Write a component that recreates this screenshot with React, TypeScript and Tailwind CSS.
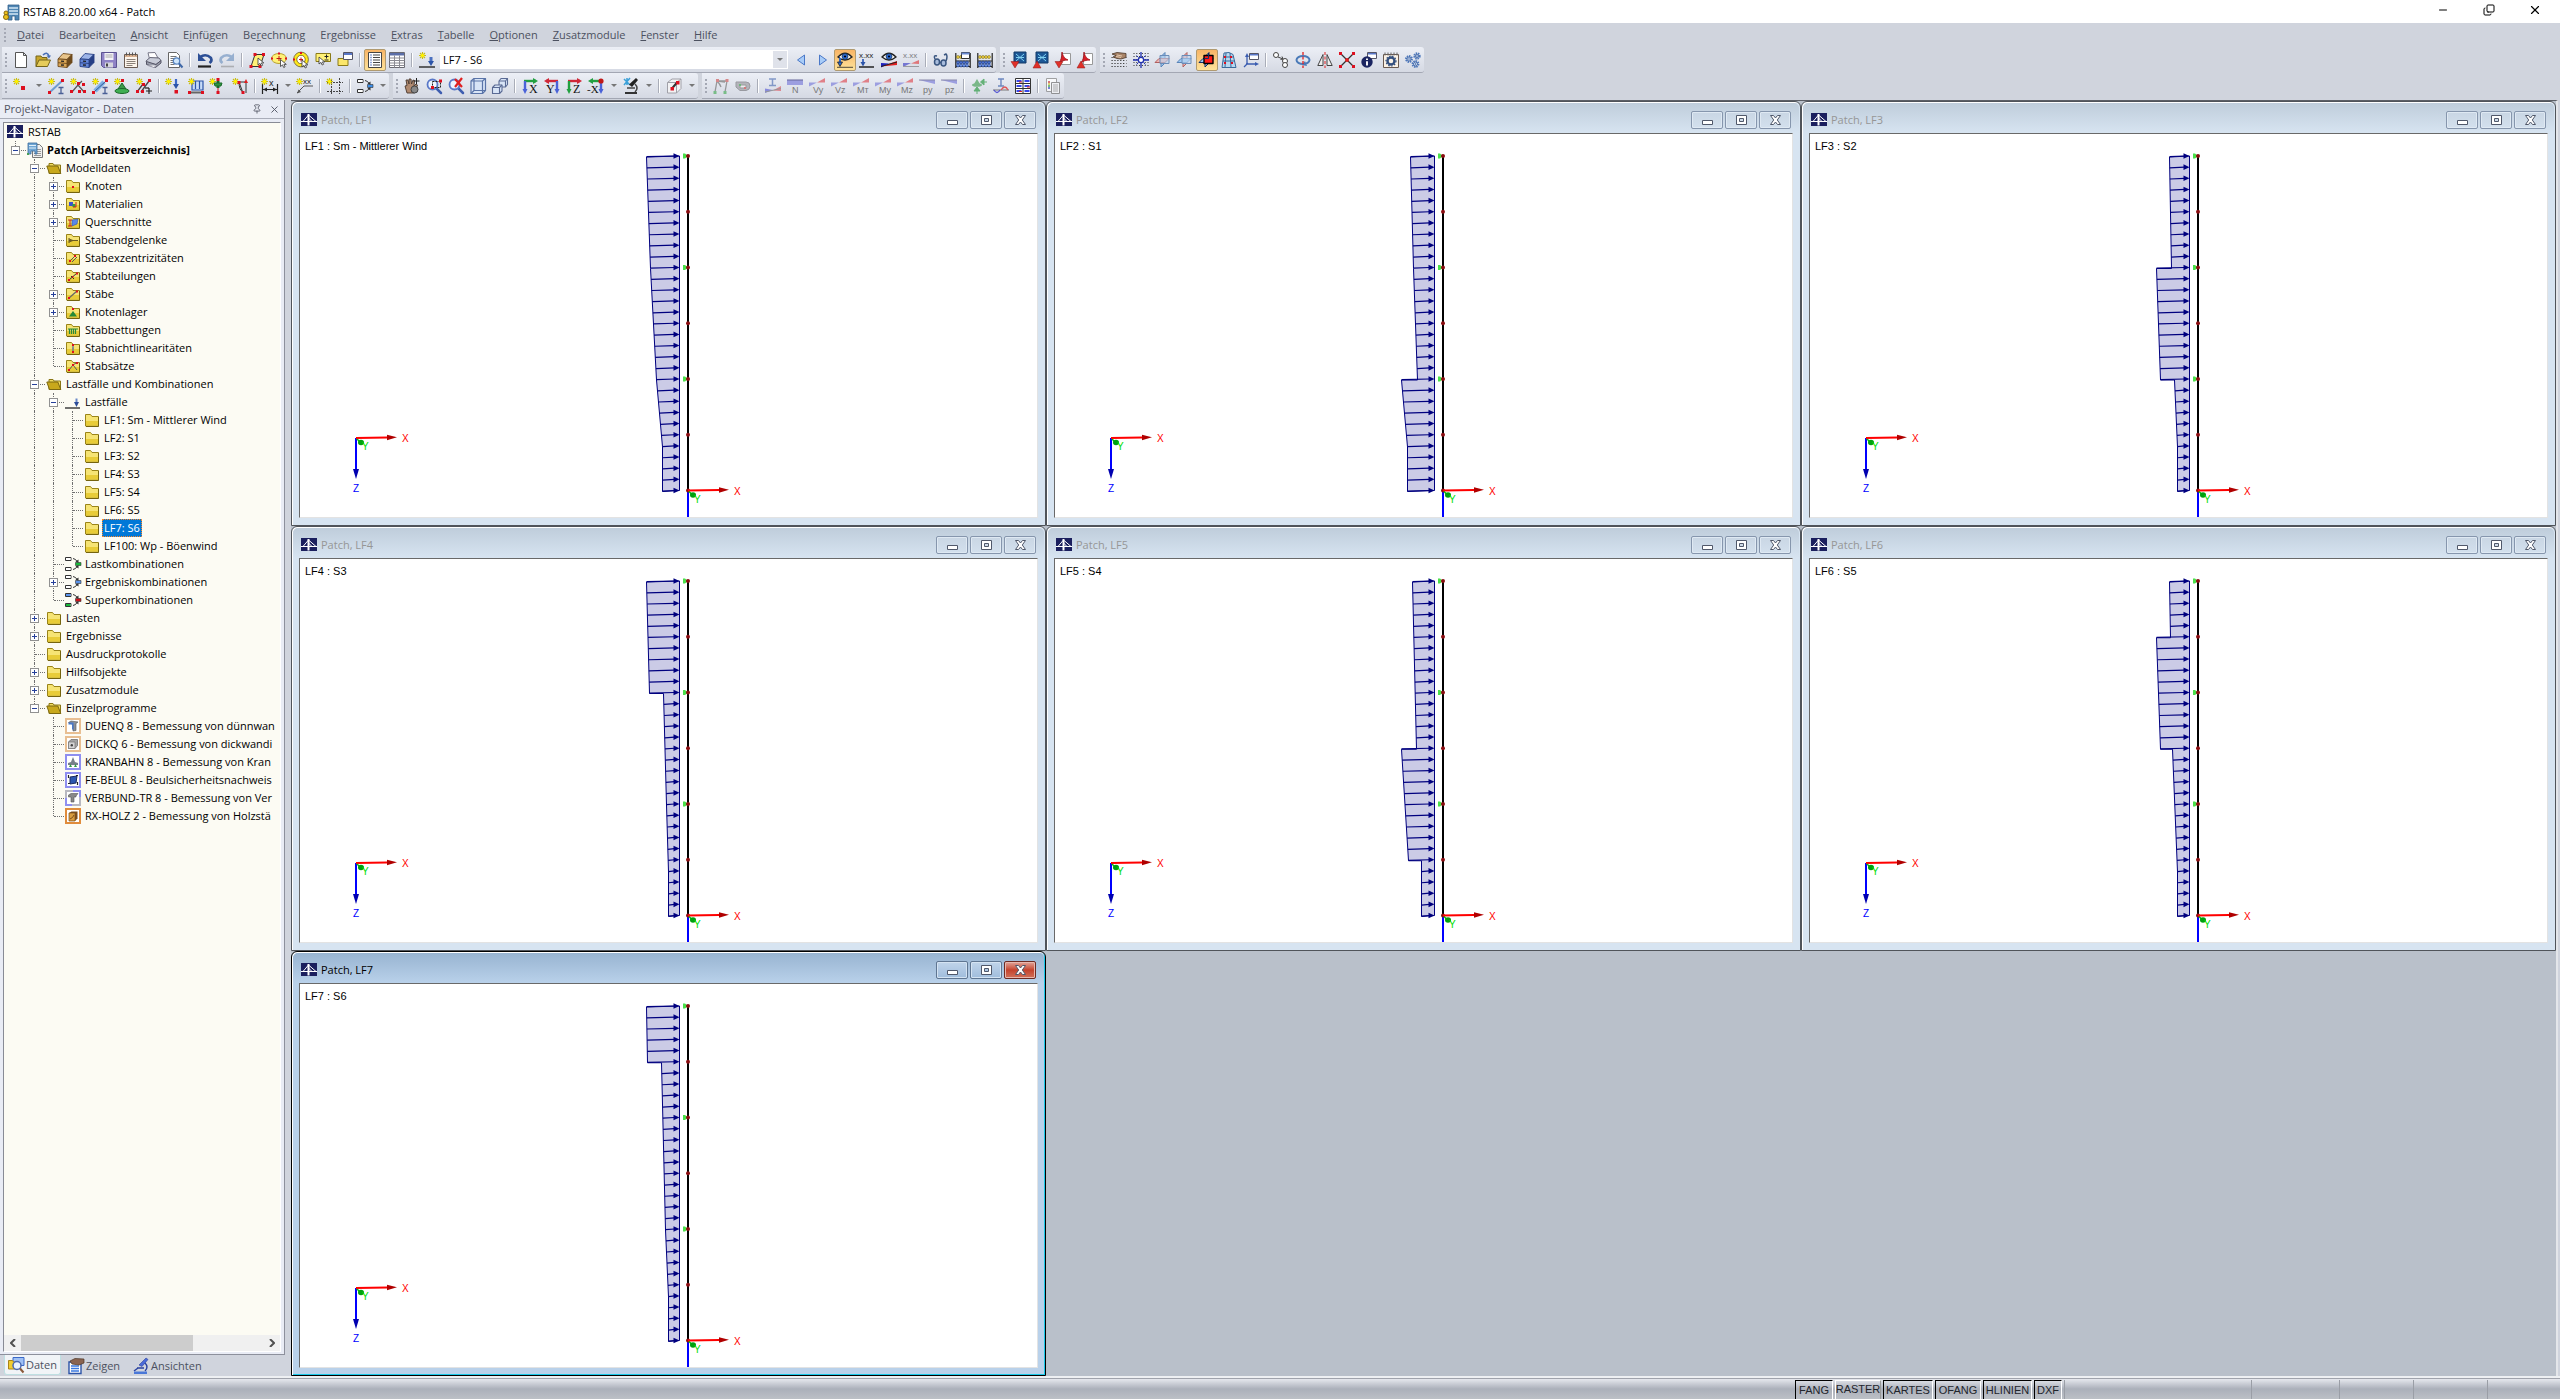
import React from "react";
import { Minus, Copy, X, Pin } from "lucide-react";

type Node = React.ReactNode;

/* ---------- small drawing parts shared by the icons (16 x 16 grid) ---------- */

const Star = ({ x = 0, y = 0 }: { x?: number; y?: number }) => (
  <g transform={`translate(${x} ${y})`}>
    <path d="M3.5 0v7M0 3.5h7M1 1l5 5M6 1L1 6" stroke="#c9bd12" strokeWidth="1.1" />
    <circle cx="3.5" cy="3.5" r="1.7" fill="#fff200" />
  </g>
);
const Dot = ({ x, y, s = 3, c = "#dd1020" }: { x: number; y: number; s?: number; c?: string }) => (
  <rect x={x} y={y} width={s} height={s} fill={c} />
);
const Txt = ({ x, y, s = 8, c = "#222", children }: { x: number; y: number; s?: number; c?: string; children: Node }) => (
  <text x={x} y={y} fontSize={s} fill={c} fontFamily="Liberation Sans, sans-serif">
    {children}
  </text>
);
const Cursor = ({ x, y }: { x: number; y: number }) => (
  <path d={`M${x} ${y}v7l2-1.6 1.2 2.6 1.4-.7-1.2-2.4h2.4z`} fill="#fff" stroke="#333" strokeWidth=".8" />
);
const Beam = () => <path d="M10.500 9.500h5M13 9.500v6M10.500 15.500h5" stroke="#4a5f96" strokeWidth="1.300" />;
const Cabinet = ({ a, b, c }: { a: string; b: string; c: string }) => (
  <g stroke={c} strokeWidth=".9" strokeLinejoin="round">
    <path d="M1 7l5-5.500 9 1-5 5z" fill={a} />
    <path d="M10 7.500l5-5v8l-5 5z" fill={c} />
    <path d="M1 7l9 .5v8L1 14.500z" fill={b} />
    <path d="M1 10.700l9 .8" />
    <path d="M4 9.200l3 .2M4 13l3 .2" stroke="#222" strokeWidth="1.300" />
  </g>
);
const Section = ({ label, half = false }: { label: string; half?: boolean }) => (
  <g>
    {half ? (
      <path d="M0 2h16v4z" fill="#9c9ee0" />
    ) : (
      <g>
        <path d="M8 4.500L16 0v4.500z" fill="#e08088" />
        <path d="M0 8.500L8 4.500H0z" fill="#9c9ee0" />
      </g>
    )}
    {half && <path d="M0 2h16" stroke="#8888a8" />}
    <Txt x={4} y={15} s={9} c="#777">
      {label}
    </Txt>
  </g>
);
const AxisView = ({ label, a, b, flip = false }: { label: string; a: string; b: string; flip?: boolean }) => (
  <g>
    <path d={flip ? "M14 3H2" : "M2 3h12"} stroke={a} strokeWidth="2.400" />
    <path d={flip ? "M5 0v6L0 3z" : "M11 0v6l5-3z"} fill={a} />
    <path d={flip ? "M13 3v9" : "M3 3v9"} stroke={b} strokeWidth="2.400" />
    <path d={flip ? "M10.500 11h5L13 16z" : "M.5 11h5L3 16z"} fill={b} />
    <text x={flip ? 2 : 7} y={15} fontSize="12" fill="#111" fontFamily="Liberation Serif, serif">
      {label}
    </text>
  </g>
);
const Lens = () => (
  <g>
    <path d="M10 10l5 5" stroke="#3f5eb0" strokeWidth="2.500" strokeLinecap="round" />
    <circle cx="6.500" cy="6.500" r="5" fill="#eef4ff" stroke="#5a78c8" strokeWidth="1.800" />
  </g>
);
const Eye = () => (
  <g>
    <path d="M1 5Q8-2.500 15 5 8 11 1 5z" fill="#fff" stroke="#222" strokeWidth="1.300" />
    <circle cx="8" cy="4.500" r="3" fill="#2c6ad0" stroke="#123" strokeWidth=".6" />
    <circle cx="8" cy="4.500" r="1.100" fill="#001" />
  </g>
);
const Planes = ({ mode }: { mode: number }) => (
  <g strokeWidth="1" strokeLinejoin="round">
    <path d="M6 4.500l4-4v10.500l-4 4z" fill={mode === 1 ? "#efb5b2" : "#9cc8f2"} stroke={mode === 1 ? "#b06060" : mode === 2 ? "#12306a" : "#5a84b8"} />
    <path d="M0 10.500l4-4h10l-4 4z" fill={mode === 0 ? "#efb5b2" : "#9cc8f2"} stroke={mode === 0 ? "#b06060" : mode === 2 ? "#12306a" : "#5a84b8"} />
    {mode === 2 ? (
      <path d="M5 3.500h9v8H5z" fill="#ff1a1a" stroke="#000" strokeWidth="1.400" />
    ) : (
      <path d="M5 3.500h9v8H5z" fill="#b9d2ee" fillOpacity=".6" stroke="#6a8cb8" />
    )}
    {mode === 2 && <path d="M9.500 1v5.500H5.500" fill="none" stroke="#12306a" />}
  </g>
);
const Abacus = ({ win = false }: { win?: boolean }) => (
  <g>
    <path d="M.8 1v15M15.200 1v15M.8 9h15M.8 14.500h15" stroke="#222" strokeWidth="1.200" />
    {[2.500, 5.500, 8.500, 11.500].map((x) => (
      <g key={x}>
        <circle cx={x + 0.5} cy="5" r="1.500" fill="#f0d040" stroke="#665a10" strokeWidth=".5" />
        <circle cx={x + 0.5} cy="10.500" r="1.500" fill="#4a70d0" stroke="#123070" strokeWidth=".5" />
        <circle cx={x + 0.5} cy="13.500" r="1.500" fill="#6a90e8" stroke="#123070" strokeWidth=".5" />
      </g>
    ))}
    {win && <path d="M6.500.5h8v6h-8z" fill="#fff" stroke="#333" />}
    {win && <path d="M6.500.5h8v2h-8z" fill="#6a8ad0" />}
  </g>
);
const Combo = ({ a = "#fff", b = "#fff", c }: { a?: string; b?: string; c: string }) => (
  <g>
    <path d="M.5 1.500h5.500v3H.5zM.5 11.500h5.500v3H.5z" fill="#fff" stroke="#333" />
    <path d="M1 2h4.500v2H1z" fill={a} />
    <path d="M1 12h4.500v2H1z" fill={b} />
    <path d="M8 2.500q3 .5 4 3M8 13.500q3-.5 4-3" fill="none" stroke="#333" />
    <path d="M10.500 5.500l3-2v3.500zM10.500 10.500l3 2V9z" fill="#333" />
    <path d="M10.500 6.500H16v3h-5.500z" fill={c} stroke="#333" strokeWidth=".6" />
  </g>
);
const Screen = ({ up = false }: { up?: boolean }) => (
  <g>
    <path d="M3 0h12v11H3z" fill="#1c5796" stroke="#123a68" />
    <path d="M5 2l8 7M13 2L5 9M5 5.500h8" stroke="#7fd0f0" />
    <path d={up ? "M4 9l4 7H0z" : "M0 9.500h8L4 16z"} fill="#e03028" stroke="#901818" strokeWidth=".5" />
  </g>
);
const Pdf = ({ up = false }: { up?: boolean }) => (
  <g>
    <path d="M6.500 1.500h9v11h-9z" fill="#fff" stroke="#999" />
    <path d="M7 0c1 4 2 6 6 8-4 0-7 1-9 3 2-3 3-6 3-11z" fill="#d82028" stroke="#a01018" strokeWidth=".8" />
    <path d={up ? "M4 9l4 7H0z" : "M0 9.500h8L4 16z"} fill="#e03028" stroke="#901818" strokeWidth=".5" />
  </g>
);
const Gear = ({ x, y, r }: { x: number; y: number; r: number }) => (
  <g>
    <circle cx={x} cy={y} r={r} fill="none" stroke="#4d78bd" strokeWidth="1.800" strokeDasharray="1.500 .8" />
    <circle cx={x} cy={y} r={r - 1} fill="#cfe0f6" stroke="#2f5598" strokeWidth=".8" />
    <circle cx={x} cy={y} r=".7" fill="#2f5598" />
  </g>
);
const Grid = () => (
  <path
    d="M.5 5.500h15M.5 8.500h15M.5 11.500h15M.5 14.500h15"
    stroke="#333"
    strokeWidth="1.200"
    strokeDasharray="1.200 1.700"
  />
);

const icons: Record<string, Node> = {
  new: <path d="M2.500.5h8l3 3v12h-11zM10.500.5v3h3" fill="#fff" stroke="#555" />,
  open: (
    <g stroke="#75651a" strokeLinejoin="round">
      <path d="M1 14.500V4h5l1 1.500h5V8" fill="#c8a62c" />
      <path d="M1 14.500L4 8h11.500l-3 6.500z" fill="#e6cc5a" />
      <path d="M8 3q4-4 6 1" fill="none" stroke="#4a70b8" strokeWidth="1.600" />
      <path d="M11.500 3.500h4.500l-2 3z" fill="#4a70b8" stroke="none" />
    </g>
  ),
  cabA: <Cabinet a="#e8c48a" b="#dba757" c="#6e4a1c" />,
  cabB: <Cabinet a="#9cb4e8" b="#6486d6" c="#263f86" />,
  save: (
    <g>
      <path d="M.5.5h15v15h-13l-2-2z" fill="#8f83c6" stroke="#5d5492" />
      <path d="M3.500 1h9v7h-9z" fill="#f4f4f8" />
      <path d="M4.500 3h7M4.500 5h7" stroke="#aaa" />
      <path d="M4 10.500h8v5H4z" fill="#d6d6de" />
      <path d="M5 11.500h2v3H5z" fill="#444" />
    </g>
  ),
  notes: (
    <g>
      <path d="M1.500 2.500h13v13h-13z" fill="#fdf5ec" stroke="#6a5a50" />
      <path d="M2 3h12v2H2z" fill="#d8b090" />
      <path d="M3.500.5v3M6.500.5v3M9.500.5v3M12.500.5v3" stroke="#555" />
      <path d="M3.500 7.500h9M3.500 9.500h9M3.500 11.500h9M3.500 13.500h6" stroke="#8a8078" />
    </g>
  ),
  print: (
    <g strokeLinejoin="round">
      <path d="M4.500 7L3 .8l7-.3 3 5.500z" fill="#fff" stroke="#778" />
      <path d="M1 9l4-3.500 9 .5 2 2.500-5 4-9-1z" fill="#c8ccd8" stroke="#667" />
      <path d="M1.500 9.500v3l9 3 5.500-4.500V8.500l-5 4z" fill="#9a9eac" stroke="#556" />
      <path d="M3 13.500l6 2 2-2" fill="#fff" stroke="#99a" />
    </g>
  ),
  preview: (
    <g>
      <path d="M1.500.5h8l3 3v12h-11z" fill="#fff" stroke="#666" />
      <path d="M3.500 4.500h6M3.500 6.500h7M3.500 8.500h4M3.500 10.500h4M3.500 12.500h4" stroke="#777" />
      <circle cx="9.500" cy="9" r="3.200" fill="#cfe6fb" stroke="#5884c0" strokeWidth="1.300" />
      <path d="M12 11.500l3.500 4" stroke="#3f68a8" strokeWidth="2" />
    </g>
  ),
  undo: (
    <g>
      <path d="M3 5q6-4 11 1 1.500 3-1.500 5" fill="none" stroke="#2c4f96" strokeWidth="2.600" />
      <path d="M1 1v8h8z" fill="#2c4f96" />
      <path d="M1 14.500h13" stroke="#222" strokeWidth="2.200" />
    </g>
  ),
  redo: (
    <g opacity=".55">
      <path d="M13 5Q7 1 2 6 .5 9 3.500 11" fill="none" stroke="#5a84b8" strokeWidth="2.600" />
      <path d="M15 1v8H7z" fill="#5a84b8" />
      <path d="M2 14.500h13" stroke="#888" strokeWidth="1.600" />
    </g>
  ),
  selRhomb: (
    <g>
      <path d="M2 14.500L6 2.500h9l-4 12z" fill="#fff176" stroke="#333" />
      <Dot x={4.500} y={1} />
      <Dot x={13} y={1} />
      <Dot x={0.500} y={13} />
      <Dot x={9.500} y={13} />
      <Cursor x={9} y={6} />
    </g>
  ),
  selEllipse: (
    <g>
      <ellipse cx="8" cy="6.500" rx="7.500" ry="5" fill="#fff176" stroke="#b8a030" />
      <Dot x={7} y={0.500} s={2} />
      <Dot x={0} y={5.500} s={2} />
      <Dot x={14} y={5.500} s={2} />
      <path d="M8 4v5M5.500 6.500h5" stroke="#c01818" />
      <Cursor x={9.500} y={7.500} />
    </g>
  ),
  selRing: (
    <g>
      <circle cx="8" cy="7.500" r="5.700" fill="#fff" stroke="#ffe81a" strokeWidth="3" />
      <circle cx="8" cy="7.500" r="7.400" fill="none" stroke="#6a5a10" strokeWidth=".8" />
      <circle cx="8" cy="7.500" r="4.200" fill="none" stroke="#6a5a10" strokeWidth=".8" />
      <path d="M8 5.500v4M6 7.500h4" stroke="#d01818" />
      <Dot x={7} y={0} s={2} />
      <Dot x={0} y={6.500} s={2} />
      <Cursor x={9} y={8} />
    </g>
  ),
  selPlus: (
    <g>
      <path d="M1 1.500h14.500v8H1z" fill="#fff176" stroke="#8a7a18" />
      <Cursor x={4} y={5} />
      <path d="M11.500 2.500v4M9.500 4.500h4M9.500 8h4" stroke="#222" />
    </g>
  ),
  selWin: (
    <g>
      <path d="M1 6.500h10v7H1z" fill="#fbe66a" stroke="#8a7a18" />
      <path d="M6.500.5h9v7h-9z" fill="#fff" stroke="#556" />
      <path d="M7 1h8v2H7z" fill="#5a78c8" />
    </g>
  ),
  list: (
    <g>
      <path d="M1.500.5h13v15h-13z" fill="#fff" stroke="#444" />
      <path d="M3.500 3h1M3.500 5.500h1M3.500 8h1M3.500 10.500h1M3.500 13h1" stroke="#2a50b0" strokeWidth="1.500" />
      <path d="M6 3h7M6 5.500h7M6 8h7M6 10.500h7M6 13h7" stroke="#444" />
    </g>
  ),
  table: (
    <g>
      <path d="M.5.500h15v15H.5z" fill="#fff" stroke="#6a6a72" />
      <path d="M1 1h14v2.500H1z" fill="#5a6ea8" />
      <path d="M.5 6h15M.5 8.500h15M.5 11h15M.5 13.500h15M5.500 3.500v12M10.500 3.500v12" stroke="#8a8a92" />
    </g>
  ),
  loadcase: (
    <g>
      <Star />
      <path d="M0 15h16" stroke="#333" strokeWidth="1.500" />
      <path d="M12 5v5" stroke="#4a70c0" strokeWidth="3" />
      <path d="M9 9h6l-3 5z" fill="#2c54a8" />
    </g>
  ),
  prev: <path d="M11.500 3v10L4.500 8z" fill="#a8ccf8" stroke="#4a78c8" />,
  next: <path d="M4.500 3v10l7-5z" fill="#a8ccf8" stroke="#4a78c8" />,
  eyeLoad: (
    <g>
      <Eye />
      <path d="M3 6v6" stroke="#2c6ad0" strokeWidth="2" />
      <path d="M.5 10h5L3 14.500zM0 15.300h16" fill="#2c6ad0" stroke="#222" strokeWidth=".8" />
    </g>
  ),
  xxx: (
    <g>
      <Txt x={0} y={6} s={8}>x.xx</Txt>
      <path d="M4 7v5" stroke="#4a70c0" strokeWidth="2" />
      <path d="M1.500 10h5L4 14.500z" fill="#2c54a8" />
      <path d="M0 15h15" stroke="#222" strokeWidth="1.500" />
    </g>
  ),
  eyeRes: (
    <g>
      <Eye />
      <path d="M0 14.500L16 9v4z" fill="#e02020" />
      <path d="M0 15.500V11l8 .5z" fill="#2020c0" />
      <path d="M0 14.500L16 10" stroke="#222" />
    </g>
  ),
  xxxRes: (
    <g opacity=".55">
      <Txt x={0} y={6} s={8}>x.xx</Txt>
      <path d="M8 11.500L16 8v4z" fill="#e02020" />
      <path d="M0 15V11h8z" fill="#2020c0" />
      <path d="M0 14.500h16" stroke="#666" />
    </g>
  ),
  glasses: (
    <g fill="none" stroke="#3a5680" strokeWidth="1.500">
      <ellipse cx="4" cy="10" rx="2.500" ry="3" fill="#a8bcdc" />
      <ellipse cx="10.500" cy="11" rx="2.500" ry="3" fill="#a8bcdc" />
      <path d="M2 7Q0 3 4 4M13 9q2-5 0-7l-2 1M6.500 10.500h1.500" />
    </g>
  ),
  abacusWin: <Abacus win />,
  abacus: <Abacus />,
  scrDown: <Screen />,
  scrUp: <Screen up />,
  pdfDown: <Pdf />,
  pdfUp: <Pdf up />,
  handGrid: (
    <g>
      <Grid />
      <path d="M1 2l5-1.500 9 1v4l-5 1.500-4-.5-4-1.500 3-1.500z" fill="#a88468" stroke="#4a3628" strokeWidth=".8" />
      <path d="M6 3l5 1M5 4.500l5 1" stroke="#f0d8c0" strokeWidth=".8" />
    </g>
  ),
  snapGrid: (
    <g>
      <path d="M.5 1.500h15M.5 4.500h15M.5 7.500h15M.5 10.500h15M.5 13.500h15" stroke="#333" strokeDasharray="1 1.800" />
      <circle cx="8" cy="8" r="2.600" fill="#fff" stroke="#2030b0" strokeWidth="1.200" />
      <path d="M8 0v5M8 11v5M0 8h5M11 8h5" stroke="#2030b0" strokeWidth="1.300" />
      <path d="M3.500 3.500l2 2M12.500 3.500l-2 2M3.500 12.500l2-2M12.500 12.500l-2-2" stroke="#2030b0" />
    </g>
  ),
  planeA: <Planes mode={0} />,
  planeB: <Planes mode={1} />,
  planeC: <Planes mode={2} />,
  building: (
    <g>
      <path d="M3 1l5-.5 4 2 3 13H1z" fill="#b8d8f0" stroke="#3a6a9a" />
      <path d="M5 1L4 15M9 1l1 14M2.500 5h10M2 9h12" stroke="#3a6a9a" />
      <Dot x={3} y={4} s={2} />
      <Dot x={9} y={4} s={2} />
      <Dot x={3} y={10} s={2} />
      <Dot x={10} y={10} s={2} />
    </g>
  ),
  coords: (
    <g>
      <path d="M4 12V4M3 12h10M5 11l-4 4" stroke="#3a5cb0" strokeWidth="1.300" fill="none" />
      <path d="M2 5l2-4 2 4zM12 10l4 2-4 2z" fill="#3a5cb0" />
      <path d="M6.500 1.500h9v6h-9z" fill="#fff" stroke="#556" />
      <path d="M7 2h8v1.500H7z" fill="#5a78c8" />
    </g>
  ),
  moveCopy: (
    <g fill="#fff" stroke="#444">
      <circle cx="3" cy="3" r="2.500" />
      <circle cx="12" cy="9" r="2.500" />
      <circle cx="12" cy="13" r="2.500" />
      <path d="M5 5l5 2M7.500 7.500L10 7 9 4.500" fill="none" />
    </g>
  ),
  rotate: (
    <g fill="none">
      <ellipse cx="8" cy="8" rx="6.500" ry="4" stroke="#4a7ab8" strokeWidth="2" />
      <path d="M10 9l-3 4 5 1z" fill="#4a7ab8" />
      <path d="M8 0v16" stroke="#e02020" strokeWidth="1.300" strokeDasharray="3 1.500" />
    </g>
  ),
  mirror: (
    <g fill="none" stroke="#444">
      <path d="M6 2.500v11H.8zM10 2.500v11h5.200z" fill="#eee" />
      <path d="M8 0v16" stroke="#e02020" strokeDasharray="3 1.500" />
    </g>
  ),
  cross: (
    <g>
      <path d="M1.500 1.500l13 13M14.500 1.500l-13 13" stroke="#333" strokeWidth="1.300" />
      <Dot x={0} y={0} />
      <Dot x={13} y={0} />
      <Dot x={0} y={13} />
      <Dot x={13} y={13} />
      <circle cx="8" cy="8" r="2" fill="#e02020" />
    </g>
  ),
  info: (
    <g>
      <path d="M6.500.5h9v6h-9z" fill="#fff" stroke="#556" />
      <path d="M7 1h8v1.500H7z" fill="#5a78c8" />
      <circle cx="6" cy="10" r="5.700" fill="#1a2460" />
      <path d="M6 6.500v1.600M6 9.200v4.300" stroke="#fff" strokeWidth="1.900" />
    </g>
  ),
  gearPage: (
    <g>
      <path d="M.5 2.500h15v13H.5z" fill="#fbf2e6" stroke="#6a5a50" />
      <path d="M2 .5v3M5 .5v3M8 .5v3M11 .5v3M14 .5v3" stroke="#666" />
      <circle cx="8" cy="9" r="3.500" fill="none" stroke="#34507e" strokeWidth="2.400" />
      <circle cx="8" cy="9" r="5" fill="none" stroke="#34507e" strokeWidth="1.200" strokeDasharray="1.500 1.500" />
    </g>
  ),
  gears: (
    <g>
      <Gear x={4} y={7} r={3} />
      <Gear x={12} y={4} r={2.800} />
      <Gear x={10.500} y={12} r={3} />
    </g>
  ),
  node: (
    <g>
      <Star />
      <Dot x={8} y={8} s={4} />
    </g>
  ),
  member: (
    <g>
      <path d="M1.500 14.500l13-12" stroke="#6f9cd0" strokeWidth="2" />
      <Star />
      <Dot x={0} y={13} />
      <Dot x={13} y={1} />
      <Beam />
    </g>
  ),
  continuous: (
    <g>
      <path d="M2 14l6-7 6 7M8 7l4-4" stroke="#555" fill="none" strokeWidth="1.200" />
      <Star />
      <Dot x={0} y={12} />
      <Dot x={7} y={4} />
      <Dot x={12} y={5} />
      <Dot x={8} y={12} />
      <Dot x={13} y={12} />
    </g>
  ),
  memberSel: (
    <g>
      <path d="M3 13L12 4" stroke="#7fb0e6" strokeWidth="4.500" />
      <path d="M1.500 14.500l13-12" stroke="#33558a" />
      <Star />
      <Dot x={0} y={13} />
      <Dot x={13} y={1} />
      <Beam />
    </g>
  ),
  support: (
    <g>
      <path d="M8 5l4 6H4z" fill="#3c9a4a" stroke="#1c6a2a" />
      <ellipse cx="8" cy="13" rx="7" ry="2.500" fill="#3fae52" stroke="#1c6a2a" />
      <Dot x={7} y={1} />
      <Star />
    </g>
  ),
  setMember: (
    <g>
      <path d="M1 14L7 6M5 14L13 3M9 10h4" stroke="#444" strokeWidth="1.300" />
      <Star />
      <Dot x={0} y={12} />
      <Dot x={6} y={5} />
      <Dot x={12} y={1} />
      <Dot x={5} y={12} />
      <path d="M13 10v6M10 13h6" stroke="#222" strokeWidth="1.200" />
    </g>
  ),
  nodeLoad: (
    <g>
      <Star x={-1} />
      <path d="M10 1v7" stroke="#3a68c8" strokeWidth="2.200" />
      <path d="M7 6h6l-3 5z" fill="#2c54a8" />
      <Dot x={8.500} y={12} s={3.500} />
    </g>
  ),
  memberLoad: (
    <g>
      <path d="M4 3h11v9H4zM7.500 3v8M11.500 3v8" fill="#c8dcf8" stroke="#2c54a8" strokeWidth="1.200" />
      <Star />
      <path d="M1 14.500h14" stroke="#666" strokeWidth="2" />
      <Dot x={0} y={13} />
      <Dot x={13} y={13} />
    </g>
  ),
  imposed: (
    <g>
      <Star x={-1} />
      <path d="M8 3v7" stroke="#1c6a2a" strokeWidth="3" />
      <path d="M4 5h8l-1 3H5z" fill="#2c9440" stroke="#1c6a2a" />
      <Dot x={6.500} y={0} />
      <Dot x={6.500} y={13} />
      <path d="M8 10v3" stroke="#d01818" />
    </g>
  ),
  imperf: (
    <g>
      <Star />
      <path d="M6 4h7M7 4l4 11M14 3v12M7 4q0 8 4 10" fill="none" stroke="#333" />
      <Dot x={5.500} y={3} />
      <Dot x={9.500} y={13} />
      <path d="M12 5h4l-2-4z" fill="#e02020" />
    </g>
  ),
  dimension: (
    <g>
      <path d="M.5 6v10M15.500 6v10M1 11.500h14" stroke="#222" strokeWidth="1.200" />
      <path d="M1 11.500l4-2v4zM15 11.500l-4-2v4z" fill="#222" />
      <Star x={-1} />
      <Txt x={7} y={8} s={9}>x</Txt>
    </g>
  ),
  comment: (
    <g>
      <Star x={-1} />
      <Txt x={6} y={6} s={8}>xx</Txt>
      <path d="M16 8H7l-7 7" fill="none" stroke="#555" />
      <path d="M0 15.500l4-1.500-2.500-2.500z" fill="#555" />
    </g>
  ),
  raster: (
    <g>
      <path d="M4.500 2v14M12.500 0v16M0 4.500h16M0 13.500h16" stroke="#444" strokeDasharray="2 1" />
      <Star x={-1} />
    </g>
  ),
  comboBlue: <Combo c="#3d8ee8" />,
  hand: (
    <g>
      <path d="M3 15L1 8l2-.5L2 2l2 0 1 4 0-5h2l.5 5L9 2l1.500.5L10 8l2-2 1.500 1-3 8z" fill="#b08a70" stroke="#4a382c" strokeWidth=".9" />
      <path d="M12.500 0v6M9.500 3h6" stroke="#222" />
      <circle cx="10.500" cy="11.500" r="3.500" fill="#888" stroke="#444" />
    </g>
  ),
  zoomWin: (
    <g>
      <Lens />
      <path d="M6.500 3.500h8v6h-8z" fill="none" stroke="#222" strokeDasharray="2 1" />
      <Dot x={13} y={1.500} />
      <Dot x={5} y={8} />
    </g>
  ),
  zoomOff: (
    <g>
      <Lens />
      <path d="M7 1l7 8M14 0L7 9" stroke="#e02020" strokeWidth="2.200" />
    </g>
  ),
  wireBox: (
    <g fill="#d8e4f6" stroke="#5a74a8" strokeWidth="1.200" strokeLinejoin="round">
      <path d="M1 3l3-2.500h11.500v12l-3 3H1z" />
      <path d="M1 3h11.500v12.500M12.500 3l3-2.500M4 .5v12h11.500M1 15.500l3-3" fill="none" />
    </g>
  ),
  boxes: (
    <g fill="#d8e4f6" stroke="#5a6a94" strokeWidth="1.100" strokeLinejoin="round">
      <path d="M7 3l2-2.500h6.500v6l-2 2.500H7z" />
      <path d="M.5 9.500L3 7h7v6l-2.500 2.500h-7z" />
      <path d="M.5 9.500h7v6M7.500 9.500L10 7M7 3h6.500v6M13.500 3l2-2.500" fill="none" />
    </g>
  ),
  viewX: <AxisView label="X" a="#22a040" b="#4a62d8" />,
  viewY: <AxisView label="Y" a="#d02838" b="#4a62d8" flip />,
  viewZ: <AxisView label="Z" a="#d02838" b="#22a040" />,
  viewMX: (
    <g>
      <path d="M13 3H3" stroke="#22a040" strokeWidth="2.400" />
      <path d="M5 0v6L0 3z" fill="#22a040" />
      <path d="M13 4v9" stroke="#4a62d8" strokeWidth="2.400" />
      <path d="M10.500 11h5L13 16z" fill="#4a62d8" />
      <circle cx="13" cy="3" r="2.600" fill="#c01818" />
      <text x="-1" y="15" fontSize="11" fill="#111" fontFamily="Liberation Serif, serif">-X</text>
    </g>
  ),
  microscope: (
    <g>
      <path d="M1 1l6 6M7 0L1 7M4 0v7" stroke="#3aa0d8" strokeWidth="1.500" />
      <path d="M13 0l2 2-6 7-3-2.500z" fill="#222" />
      <path d="M12 6q4 4 0 8M4 10h8" fill="none" stroke="#444" strokeWidth="1.500" />
      <path d="M2 14h12v2H2z" fill="#333" />
    </g>
  ),
  cube: (
    <g>
      <path d="M1.500 4.500L6 1h9v9.500L10.500 15h-9zM1.500 4.500h9V15M10.500 4.500L15 1" fill="#f2f2f4" stroke="#a0a0a8" />
      <path d="M6 10.500l5-6" stroke="#333" strokeWidth="2" />
      <Dot x={4.500} y={9} s={3.500} />
      <Dot x={10} y={3} s={3.500} />
    </g>
  ),
  frame: (
    <g opacity=".7">
      <path d="M2 14L4 3h10l-2 11M4 3l8 1M4 3q3 3 4 6" fill="none" stroke="#777" strokeWidth="1.300" />
      <Dot x={3} y={1} c="#d06060" />
      <Dot x={12.500} y={1} c="#d06060" />
      <Dot x={0.500} y={13} c="#50b060" />
      <Dot x={10.500} y={13} c="#50b060" />
    </g>
  ),
  solid: (
    <g opacity=".8">
      <path d="M1 4h10q4 0 4 4t-4 4.500H5L1 9z" fill="#a8a8ae" stroke="#88888e" />
      <path d="M5 7h6v3H5z" fill="#eee" stroke="#888" />
      <Dot x={4} y={6} s={2} c="#50b060" />
      <Dot x={9} y={9} s={2} c="#d06060" />
    </g>
  ),
  internal: (
    <g opacity=".7">
      <path d="M4 1h7M7.500 1v6M4 7.500h7" stroke="#5a78b8" strokeWidth="1.500" />
      <path d="M0 15v-4.500L8 12z" fill="#6668d8" />
      <path d="M8 12.500L16 8v5z" fill="#e06068" />
      <path d="M0 14l16-3.500" stroke="#777" />
    </g>
  ),
  secN: (
    <g>
      <path d="M0 2h16v5H0z" fill="#9c9ee0" />
      <path d="M0 2h16" stroke="#66669a" />
      <Txt x={5} y={15} s={9} c="#777">N</Txt>
    </g>
  ),
  secVy: <Section label="Vy" />,
  secVz: <Section label="Vz" />,
  secMt: <Section label="Mт" />,
  secMy: <Section label="My" />,
  secMz: <Section label="Mz" />,
  secPy: <Section label="py" half />,
  secPz: <Section label="pz" half />,
  reaction: (
    <g opacity=".75">
      <path d="M6 1l3 5H3z" fill="#58a868" />
      <ellipse cx="6" cy="7" rx="5" ry="1.800" fill="#58a868" />
      <path d="M16 4h-5M13 1l-3.500 3L13 7zM6 16v-4M3 13l3-4 3 4z" fill="#3aa050" stroke="#3aa050" />
    </g>
  ),
  deform: (
    <g opacity=".85">
      <path d="M5 1h6M8 1v7M5 8h6" stroke="#5a78b8" strokeWidth="1.400" />
      <path d="M0 12h16" stroke="#666" />
      <path d="M1 12q3 5 6 0" fill="none" stroke="#3a3ad0" strokeWidth="1.300" />
      <path d="M8 12q4-6 7 0" fill="none" stroke="#e04040" strokeWidth="1.300" />
    </g>
  ),
  multi: (
    <g>
      <path d="M.5.5h15v15H.5zM8 0v16M0 5.500h16M0 10.500h16" fill="#fff" stroke="#333" />
      <path d="M1.500 3h5M9.500 3h5M1.500 8h5M9.500 8h5M1.500 13h5M9.500 13h5" stroke="#3848e8" strokeWidth="1.800" />
      <path d="M4 4h3M12 9h3M4 13.500h3" stroke="#e02020" />
    </g>
  ),
  report: (
    <g opacity=".75">
      <path d="M1.500.5h10v13h-10z" fill="#fff" stroke="#888" />
      <path d="M3 3h2v2H3z" fill="#d05050" />
      <path d="M3 5h2v2H3z" fill="#d8c850" />
      <path d="M3 7h2v2H3z" fill="#50b060" />
      <path d="M3 9h2v2H3z" fill="#5060d0" />
      <path d="M6.500 4.500h8v11h-8z" fill="#f4f4f6" stroke="#777" />
      <path d="M8 7h5M8 9h5M8 11h5M8 13h5" stroke="#999" />
    </g>
  ),
  /* navigator */
  logo: (
    <g>
      <path d="M0 1h16v13H0z" fill="#1b1f5e" />
      <path d="M0 9.500h16M7.500 3L2 9.500M7.500 3l7.500 6.500M7.500 6l3.500 3.500" stroke="#fff" />
      <path d="M6.500 2h2v11.500h-2z" fill="#fff" />
    </g>
  ),
  app: (
    <g>
      <path d="M5 1h11v15h-4v-4H9v4H5z" fill="#4f86b4" stroke="#33608a" strokeWidth=".8" />
      <path d="M6 4h9M6 7h9M6 10h9" stroke="#d4e6f4" strokeWidth="1.400" />
      <circle cx="3" cy="9" r="2" fill="#ecc21c" stroke="#8a6a10" />
      <circle cx="3" cy="13" r="2.500" fill="#ecc21c" stroke="#8a6a10" />
    </g>
  ),
  project: (
    <g>
      <path d="M5.500 2.500h7l3 3v10h-10z" fill="#f0f0f0" stroke="#777" />
      <path d="M10 7.500h4M10 9.500h4M7 11.500h7M7 13.500h7" stroke="#999" />
      <path d="M1 12V1h9v11H8V9H4v3z" fill="#6fa6d4" stroke="#3a6a9a" strokeWidth=".8" />
      <path d="M2 3.500h7M2 6h7" stroke="#e2f0fa" />
      <Dot x={0} y={11} s={2} c="#48a058" />
    </g>
  ),
  lastfall: (
    <g>
      <path d="M0 14h15" stroke="#333" strokeWidth="1.400" />
      <path d="M11.500 4.500v4" stroke="#6a88c8" strokeWidth="2" />
      <path d="M9 8h5l-2.500 5z" fill="#2c4c98" />
    </g>
  ),
  lk: <Combo c="#18b838" />,
  ek: <Combo c="#5a94ec" />,
  sk: <Combo a="#5a94ec" b="#18b838" c="#d01018" />,
  duenq: (
    <g>
      <path d="M1 1h14v14H1z" fill="#fff" stroke="#e8bf92" strokeWidth="2" />
      <path d="M3.500 4.500L6 3l7 1-2 1.500v7l-3 .5V6.500z" fill="#8a8f98" stroke="#555" strokeWidth=".6" />
      <path d="M3.500 4.500h5v7H7v-5H3.500z" fill="#4a78c8" />
    </g>
  ),
  dickq: (
    <g>
      <path d="M1 1h14v14H1z" fill="#fff" stroke="#e8bf92" strokeWidth="2" />
      <path d="M3.500 6L6 3.500h6.500v6L10 12.500H3.500z" fill="#a4a4a4" stroke="#666" strokeWidth=".7" />
      <path d="M3.500 6H10v6.500H3.500z" fill="#d4d4d4" stroke="#777" strokeWidth=".7" />
      <circle cx="6.800" cy="9.200" r="1.200" fill="#444" />
    </g>
  ),
  kran: (
    <g>
      <path d="M1 1h14v14H1z" fill="#fff" stroke="#8f8ff0" strokeWidth="2" />
      <path d="M8 3l2 5 3 1v2H3V9l3-1z" fill="#77808a" />
      <path d="M4 13l1.500-3L7 13zM9 13l1.500-3L12 13z" fill="#2f9a45" />
    </g>
  ),
  febeul: (
    <g>
      <path d="M1 1h14v14H1z" fill="#fff" stroke="#8f8ff0" strokeWidth="2" />
      <path d="M5 5l7-1-1 7-6 1z" fill="#2c56b0" stroke="#1c2c60" />
      <path d="M3.500 3v3M3 11.500h2M11 3.500h2M12.500 10v3" stroke="#222" strokeWidth="1.200" />
    </g>
  ),
  verbund: (
    <g>
      <path d="M1 1h14v14H1z" fill="#fff" stroke="#b8b8c0" strokeWidth="2" />
      <path d="M8 1h7v6M1 8v7h6" fill="none" stroke="#8f8ff0" strokeWidth="2" />
      <path d="M3.500 5L6 3.500h7L11 6v1H9v5H6V7H3.500z" fill="#888" stroke="#555" strokeWidth=".6" />
    </g>
  ),
  holz: (
    <g>
      <path d="M1 1h14v14H1z" fill="#fff" stroke="#e08c3c" strokeWidth="2" />
      <path d="M4 5l2.500-1.500H12.500v7L10 13H4z" fill="#7a4e1c" />
      <path d="M4 5h6v8H4z" fill="#d89c3e" stroke="#7a4e1c" strokeWidth=".7" />
      <path d="M5 11q3-1 4-4" fill="none" stroke="#7a4e1c" />
    </g>
  ),
  tabDaten: (
    <g>
      <path d="M5 .5h11v8H5z" fill="#9fc0f4" stroke="#3a68c8" />
      <path d="M.5 3.500h4l1 1.500h3v7h-8z" fill="#f0cc30" stroke="#a88418" />
      <circle cx="9" cy="8.500" r="4" fill="#e8f2ff" stroke="#4a68b0" strokeWidth="1.500" />
      <path d="M12 11.500l3.500 4" stroke="#8a5a3a" strokeWidth="2" />
    </g>
  ),
  tabZeigen: (
    <g>
      <path d="M1 4h12v11.500H1z" fill="#fff" stroke="#2c54a8" strokeWidth="1.400" />
      <path d="M3 8h8M3 10.500h8M3 13h8" stroke="#3a78e0" strokeWidth="1.300" />
      <path d="M2 3l5-2.500 9 .5v4l-5 2-7-1z" fill="#8a6450" stroke="#4a3424" strokeWidth=".7" />
    </g>
  ),
  tabAnsichten: (
    <g>
      <path d="M13 0l2 1.500-6 7L6 7z" fill="#4a6ad8" stroke="#2840a0" strokeWidth=".6" />
      <path d="M12 5q4 4 0 8M5 10l-4 3M4 10h7" fill="none" stroke="#2840a0" strokeWidth="1.400" />
      <path d="M1 13.500h13V16H1z" fill="#4a78d8" />
    </g>
  ),
};

const folderMarks: Record<string, Node> = {
  plain: null,
  knoten: <Dot x={7} y={8} s={2} />,
  material: (
    <g>
      <Dot x={4} y={6} s={4} c="#3a50d0" />
      <Dot x={7.500} y={8} c="#30a040" />
      <path d="M11 6v5h-3" fill="none" stroke="#d02020" />
    </g>
  ),
  quer: (
    <g>
      <path d="M7 6l6-1-1 5-5 2z" fill="#5a88e8" stroke="#3050a8" strokeWidth=".6" />
      <path d="M3 6h4M5 6v6M3 12h4" stroke="#c02020" />
    </g>
  ),
  gelenk: <path d="M4 6v5M4 8.500h9M4 7l4 1.500-4 1.500" fill="none" stroke="#6a5a20" />,
  exz: (
    <g>
      <path d="M5 11l5-5M7 12l5-5" stroke="#555" />
      <Dot x={9} y={5} s={2} />
      <Dot x={4} y={10} s={2} />
    </g>
  ),
  teil: (
    <g>
      <path d="M4 12l8-7M6 8l3 3" stroke="#333" />
      <Dot x={11} y={4.500} s={2} />
      <Dot x={3} y={11} s={2} />
      <Dot x={7} y={8} s={1.500} />
    </g>
  ),
  stab: (
    <g>
      <path d="M4 12l8-7" stroke="#666" strokeWidth="1.300" />
      <Dot x={11} y={4.500} s={2} />
      <Dot x={3} y={11} s={2} />
    </g>
  ),
  lager: (
    <g>
      <path d="M8 7l4 5.500H4z" fill="#258a38" />
      <Dot x={7} y={4} s={2} />
    </g>
  ),
  bett: <path d="M3 7h10M4.500 7v5M6.500 7v5M8.500 7v5M10.500 7v5" stroke="#2a8a3c" strokeWidth="1.200" />,
  nicht: (
    <g>
      <path d="M8 5v7" stroke="#3a50a0" />
      <Dot x={7} y={4} s={2} />
      <Dot x={7} y={11} s={2} />
      <Dot x={7} y={7.500} s={2} c="#888" />
    </g>
  ),
  satz: (
    <g>
      <path d="M4 12l4-5 4 5M8 7l3-2" fill="none" stroke="#555" />
      <Dot x={3} y={11} s={2} />
      <Dot x={7} y={6} s={2} />
      <Dot x={11} y={4} s={2} />
    </g>
  ),
};

const Icon = ({ name }: { name: string }) => {
  if (name === "folderOpen")
    return (
      <svg viewBox="0 0 16 16" className="size-4 shrink-0" aria-hidden="true">
        <path d="M3 13.500V3.500h4l1 1.500h6.500v8.500z" fill="#f0dc60" stroke="#8a7614" />
        <path d="M.8 6h11l3 7.500H3.500z" fill="#c8a81c" stroke="#7c6810" strokeLinejoin="round" />
      </svg>
    );
  if (name in folderMarks)
    return (
      <svg viewBox="0 0 16 16" className="size-4 shrink-0" aria-hidden="true">
        <path d="M1.500 2.500h5l1.500 2h6.500v9.500h-13z" fill="#f6e474" stroke="#9a8418" strokeLinejoin="round" />
        <path d="M2 9h12v4.500H2z" fill="#e8cc38" />
        <path d="M14.500 5v9.500H2" fill="none" stroke="#75640e" />
        {folderMarks[name]}
      </svg>
    );
  return (
    <svg viewBox="0 0 16 16" className="size-4 shrink-0 overflow-visible" fill="none" aria-hidden="true">
      {icons[name]}
    </svg>
  );
};

/* ---------- toolbars ---------- */

const activeTools = new Set(["list", "eyeLoad", "planeC"]);

const Grip = () => (
  <span className="flex w-2 shrink-0 flex-col items-center gap-[2px]">
    <i className="size-[2px] bg-[#a4a8b4]" />
    <i className="size-[2px] bg-[#a4a8b4]" />
    <i className="size-[2px] bg-[#a4a8b4]" />
    <i className="size-[2px] bg-[#a4a8b4]" />
  </span>
);

const Tool = ({ name }: { name: string }) => {
  if (name === "|")
    return (
      <span className="flex w-2 shrink-0 justify-center">
        <i className="h-[14px] w-px bg-[#a9adb8]" />
        <i className="h-[14px] w-px bg-white" />
      </span>
    );
  if (name === "v")
    return (
      <button aria-label="Weitere" className="flex w-[13px] shrink-0 justify-center">
        <svg viewBox="0 0 6 3" className="h-[3px] w-[6px]" aria-hidden="true">
          <path d="M0 0h6L3 3z" fill="#777" />
        </svg>
      </button>
    );
  return (
    <button
      aria-label={name}
      className={
        activeTools.has(name)
          ? "flex size-[22px] shrink-0 items-center justify-center rounded-[2px] border border-[#b09a70] bg-linear-to-b from-[#f8b566] to-[#fde29a]"
          : "flex size-[22px] shrink-0 items-center justify-center"
      }
    >
      <Icon name={name} />
    </button>
  );
};

const Band = ({ items, children }: { items: string; children?: Node }) => (
  <div className="flex h-[26px] items-center rounded-r-[3px] border-b border-[#a3a7b3] bg-linear-to-b from-[#eceff6] to-[#d5d9e3]">
    <Grip />
    {items.split(" ").map((n, i) => (n === "combo" ? <React.Fragment key={i}>{children}</React.Fragment> : <Tool key={i} name={n} />))}
  </div>
);

const menus = [
  ["", "D", "atei"],
  ["Bearbeite", "n", ""],
  ["", "A", "nsicht"],
  ["E", "i", "nfügen"],
  ["Be", "r", "echnung"],
  ["Er", "g", "ebnisse"],
  ["", "E", "xtras"],
  ["", "T", "abelle"],
  ["", "O", "ptionen"],
  ["", "Z", "usatzmodule"],
  ["", "F", "enster"],
  ["", "H", "ilfe"],
];

/* ---------- navigator ---------- */

type Row = [level: number, label: string, icon: string, exp?: "+" | "-"];

const rows: Row[] = [
  [1, "Patch [Arbeitsverzeichnis]", "project", "-"],
  [2, "Modelldaten", "folderOpen", "-"],
  [3, "Knoten", "knoten", "+"],
  [3, "Materialien", "material", "+"],
  [3, "Querschnitte", "quer", "+"],
  [3, "Stabendgelenke", "gelenk"],
  [3, "Stabexzentrizitäten", "exz"],
  [3, "Stabteilungen", "teil"],
  [3, "Stäbe", "stab", "+"],
  [3, "Knotenlager", "lager", "+"],
  [3, "Stabbettungen", "bett"],
  [3, "Stabnichtlinearitäten", "nicht"],
  [3, "Stabsätze", "satz"],
  [2, "Lastfälle und Kombinationen", "folderOpen", "-"],
  [3, "Lastfälle", "lastfall", "-"],
  [4, "LF1: Sm - Mittlerer Wind", "plain"],
  [4, "LF2: S1", "plain"],
  [4, "LF3: S2", "plain"],
  [4, "LF4: S3", "plain"],
  [4, "LF5: S4", "plain"],
  [4, "LF6: S5", "plain"],
  [4, "LF7: S6", "plain"],
  [4, "LF100: Wp - Böenwind", "plain"],
  [3, "Lastkombinationen", "lk"],
  [3, "Ergebniskombinationen", "ek", "+"],
  [3, "Superkombinationen", "sk"],
  [2, "Lasten", "plain", "+"],
  [2, "Ergebnisse", "plain", "+"],
  [2, "Ausdruckprotokolle", "plain"],
  [2, "Hilfsobjekte", "plain", "+"],
  [2, "Zusatzmodule", "plain", "+"],
  [2, "Einzelprogramme", "folderOpen", "-"],
  [3, "DUENQ 8 - Bemessung von dünnwan", "duenq"],
  [3, "DICKQ 6 - Bemessung von dickwandi", "dickq"],
  [3, "KRANBAHN 8 - Bemessung von Kran", "kran"],
  [3, "FE-BEUL 8 - Beulsicherheitsnachweis", "febeul"],
  [3, "VERBUND-TR 8 - Bemessung von Ver", "verbund"],
  [3, "RX-HOLZ 2 - Bemessung von Holzstä", "holz"],
];

/* true when another row of the given level follows before its parent ends */
const continues = (index: number, level: number) => {
  for (let i = index + 1; i < rows.length; i++) {
    if (rows[i][0] < level) return false;
    if (rows[i][0] === level) return true;
  }
  return false;
};

const TreeRow = ({ row, index }: { row: Row; index: number }) => {
  const [level, label, icon, exp] = row;
  const selected = label === "LF7: S6";
  return (
    <li className="flex h-[18px] items-center pl-[2px] whitespace-nowrap">
      {Array.from({ length: level }, (_, i) => {
        const own = i === level - 1;
        const more = continues(index, i + 1);
        return (
          <span key={i} className="relative h-full w-[19px] shrink-0">
            {(own || more) && (
              <i className={more ? "absolute top-0 left-[9px] h-full border-l border-dotted border-[#707070]" : "absolute top-0 left-[9px] h-[9px] border-l border-dotted border-[#707070]"} />
            )}
            {own && <i className="absolute top-[9px] left-[10px] w-[10px] border-t border-dotted border-[#707070]" />}
            {own && exp && (
              <button aria-label={exp === "+" ? "Aufklappen" : "Zuklappen"} className="absolute top-[5px] left-[5px] flex size-[9px] items-center justify-center border border-[#919191] bg-white">
                <svg viewBox="0 0 5 5" className="size-[5px]" aria-hidden="true">
                  <path d={exp === "+" ? "M0 2.500h5M2.500 0v5" : "M0 2.500h5"} stroke="#26409a" />
                </svg>
              </button>
            )}
          </span>
        );
      })}
      <span className="mx-[2px] flex">
        <Icon name={icon} />
      </span>
      <span
        className={
          selected
            ? "h-[18px] bg-[#0078d7] px-[2px] text-white outline outline-dotted -outline-offset-1 outline-[#ff8728]"
            : level === 1
              ? "pl-[2px] font-bold"
              : "pl-[2px]"
        }
      >
        {label}
      </span>
    </li>
  );
};

/* ---------- model windows ---------- */

const TOP = 22;
const STEP = 11.15;
const BASE = 379.5;
const AXIS = 388;

type Load = [index: number, length: number][];

const loads: { title: string; caption: string; load: Load }[] = [
  { title: "Patch, LF1", caption: "LF1 : Sm - Mittlerer Wind", load: [[0, 33], [10, 29], [20, 23], [26, 17], [30, 17]] },
  { title: "Patch, LF2", caption: "LF2 : S1", load: [[0, 24], [10, 21], [20, 17], [20, 33], [26, 27], [30, 27]] },
  { title: "Patch, LF3", caption: "LF3 : S2", load: [[0, 20], [10, 18], [10, 33], [20, 29], [20, 15], [26, 12], [30, 12]] },
  { title: "Patch, LF4", caption: "LF4 : S3", load: [[0, 33], [10, 30], [10, 16], [20, 13], [26, 11], [30, 11]] },
  { title: "Patch, LF5", caption: "LF5 : S4", load: [[0, 22], [15, 18], [15, 33], [25, 26], [25, 13], [30, 13]] },
  { title: "Patch, LF6", caption: "LF6 : S5", load: [[0, 20], [5, 19], [5, 33], [15, 29], [15, 17], [26, 12], [30, 12]] },
  { title: "Patch, LF7", caption: "LF7 : S6", load: [[0, 33], [5, 32], [5, 18], [20, 14], [26, 11], [30, 11]] },
];

const lengthAt = (load: Load, i: number) => {
  let best = 0;
  for (let k = 0; k < load.length - 1; k++) {
    const [a, la] = load[k];
    const [b, lb] = load[k + 1];
    if (b > a && i >= a && i <= b) best = Math.max(best, la + ((lb - la) * (i - a)) / (b - a));
  }
  return best;
};

const Label = ({ x, y, c, children }: { x: number; y: number; c: string; children: Node }) => (
  <text x={x} y={y} fill={c} fontSize="10" fontFamily="Liberation Sans, sans-serif">
    {children}
  </text>
);

const Triad = ({ x, y }: { x: number; y: number }) => (
  <g transform={`translate(${x} ${y})`}>
    <path d="M0 0L31 -.6" stroke="#f00" strokeWidth="2" />
    <path d="M31 -3.200l10 2.500-10 3z" fill="#b00000" />
    <path d="M1 1l4 4" stroke="#00c000" strokeWidth="1.500" />
    <ellipse cx="5" cy="4.500" rx="3" ry="2.800" fill="#00a010" />
    <Label x={46} y={4} c="#f00">X</Label>
    <Label x={6} y={12} c="#0d0">Y</Label>
  </g>
);

const Model = ({ load }: { load: Load }) => {
  const ys = Array.from({ length: 31 }, (_, i) => TOP + i * STEP);
  const outline = load.map(([i, len]) => `${BASE - len} ${TOP + i * STEP + 1}`).join("L");
  return (
    <svg viewBox="0 0 737 383" className="block size-full" role="img" aria-label="Lastbild">
      <path d={`M${BASE} ${TOP}L${outline}L${BASE} ${ys[30]}z`} fill="#cbcbe6" stroke="#00007f" />
      {ys.map((y, i) => (
        <g key={i}>
          <path d={`M${BASE - lengthAt(load, i)} ${y + 0.7}L${BASE - 5} ${y}`} stroke="#00007f" strokeWidth="1.200" />
          <path d={`M${BASE - 6} ${y - 2.800}v5.600L${BASE} ${y}z`} fill="#00007f" />
        </g>
      ))}
      <path d={`M${AXIS} ${TOP}V${ys[30]}`} stroke="#000" strokeWidth="2" />
      <path d={`M${AXIS} ${ys[30]}V383`} stroke="#00f" strokeWidth="2" />
      {[0, 10, 20].map((i) => (
        <path key={i} d={`M${AXIS - 5} ${ys[i] - 2.500}h2l3 2.500-3 2.500h-2z`} fill="#4ae04a" />
      ))}
      {[0, 5, 10, 15, 20, 25, 30].map((i) => (
        <circle key={i} cx={AXIS} cy={ys[i]} r="2" fill="#8a0c10" />
      ))}
      <Triad x={AXIS} y={ys[30]} />
      <path d="M56 304v34" stroke="#00f" strokeWidth="2" />
      <path d="M53 335h6l-3 10z" fill="#0000b0" />
      <Label x={53} y={358} c="#00f">Z</Label>
      <Triad x={56} y={304} />
    </svg>
  );
};

const MdiButton = ({ kind, active }: { kind: "min" | "max" | "close"; active: boolean }) => (
  <button
    aria-label={kind === "min" ? "Minimieren" : kind === "max" ? "Maximieren" : "Schließen"}
    className={
      kind === "close" && active
        ? "flex h-[18px] w-8 items-center justify-center rounded-[2px] border border-[#6e2a22] bg-linear-to-b from-[#e0a49a] via-[#c4422c] to-[#d0705a] shadow-[inset_0_0_0_1px_#e8b8ae]"
        : active
          ? "flex h-[18px] w-8 items-center justify-center rounded-[2px] border border-[#5f7692] bg-linear-to-b from-[#c0d4ea] to-[#a0bddc] shadow-[inset_0_0_0_1px_#d4e3f2]"
          : "flex h-[18px] w-8 items-center justify-center rounded-[2px] border border-[#8696ad] bg-linear-to-b from-[#c9d6e4] to-[#d3e0ed] shadow-[inset_0_0_0_1px_#dfe9f3]"
    }
  >
    <svg viewBox="0 0 13 12" className="h-3 w-[13px]" fill="#fff" stroke="#50586a" aria-hidden="true">
      {kind === "min" && <path d="M1.500 6.500h10v4h-10z" />}
      {kind === "max" && <path d="M1.500 1.500h10v9h-10zM4.500 4.500h4v3h-4z" fillRule="evenodd" />}
      {kind === "close" && <path d="M1.500 1.500h3l2 2.500 2-2.500h3L8.300 6l3.200 4.500h-3l-2-2.500-2 2.500h-3L4.700 6z" />}
    </svg>
  </button>
);

const ModelWindow = ({ title, caption, load, active }: { title: string; caption: string; load: Load; active: boolean }) => (
  <section
    className={
      active
        ? "flex min-h-0 flex-col rounded-t-[6px] border border-black bg-[#b9d1ea] px-[7px] pb-[7px] shadow-[inset_1px_1px_0_#fff,inset_-1px_-1px_0_#19c8e8]"
        : "flex min-h-0 flex-col rounded-t-[6px] border border-[#50545a] bg-[#d7e4f1] px-[7px] pb-[7px] shadow-[inset_1px_1px_0_#fff]"
    }
  >
    <header
      className={
        active
          ? "-mx-[6px] mt-px flex h-[30px] shrink-0 items-center gap-1 rounded-t-[5px] bg-linear-to-b from-[#98b4d1] to-[#b9d1ea] px-[8px] pt-1 text-black"
          : "-mx-[6px] mt-px flex h-[30px] shrink-0 items-center gap-1 rounded-t-[5px] bg-linear-to-b from-[#bfcddb] to-[#d7e4f1] px-[8px] pt-1 text-[#969696]"
      }
    >
      <Icon name="logo" />
      <h2 className="grow">{title}</h2>
      <div className="flex gap-[2px]">
        <MdiButton kind="min" active={active} />
        <MdiButton kind="max" active={active} />
        <MdiButton kind="close" active={active} />
      </div>
    </header>
    <div className="relative min-h-0 flex-1 border border-t-[#696969] border-r-[#e3e3e3] border-b-[#e3e3e3] border-l-[#696969] bg-white">
      <p className="absolute top-1 left-[5px] font-['Liberation_Sans',sans-serif] text-[11px] leading-4 text-black">{caption}</p>
      <Model load={load} />
    </div>
  </section>
);

/* ---------- page ---------- */

const fields: [string, boolean, string][] = [
  ["FANG", true, "w-[38px]"],
  ["RASTER", false, "w-[46px]"],
  ["KARTES", true, "w-[50px]"],
  ["OFANG", true, "w-[46px]"],
  ["HLINIEN", true, "w-[49px]"],
  ["DXF", true, "w-[28px]"],
];

export default function App() {
  return (
    <div className="flex h-screen flex-col overflow-hidden bg-[#d0d4dd] font-['Open_Sans','Noto_Sans',sans-serif] text-[11px] leading-[18px] text-black">
      <header className="flex h-[23px] shrink-0 items-center bg-white pr-[2px] pl-[3px]">
        <Icon name="app" />
        <h1 className="grow pl-1">RSTAB 8.20.00 x64 - Patch</h1>
        <div className="flex self-start">
          <button aria-label="Minimieren" className="flex h-5 w-[46px] items-center justify-center">
            <Minus size={12} strokeWidth={2} />
          </button>
          <button aria-label="Wiederherstellen" className="flex h-5 w-[46px] items-center justify-center">
            <Copy size={12} strokeWidth={2} className="-scale-x-100 rotate-180" />
          </button>
          <button aria-label="Schließen" className="flex h-5 w-[46px] items-center justify-center">
            <X size={14} strokeWidth={2} />
          </button>
        </div>
      </header>

      <nav className="flex h-6 shrink-0 items-center pl-px text-[#4c5160]">
        <Grip />
        <div className="flex gap-[15px] pl-2">
          {menus.map(([a, u, b]) => (
            <button key={a + u + b}>
              {a}
              <u>{u}</u>
              {b}
            </button>
          ))}
        </div>
      </nav>

      <div className="flex shrink-0 gap-1 pl-[2px]">
        <Band items="new open cabA cabB save notes print preview | undo redo | selRhomb selEllipse selRing selPlus selWin | list table | loadcase combo prev next eyeLoad xxx eyeRes xxxRes | glasses abacusWin abacus">
          <div className="relative mr-[2px] ml-[2px] h-[19px] w-[348px]">
            <select aria-label="Lastfall" className="h-full w-full appearance-none bg-white pl-[3px]">
              <option>LF7 - S6</option>
            </select>
            <span className="pointer-events-none absolute top-px right-px flex h-[17px] w-[14px] items-center justify-center bg-[#dfe2ea]">
              <svg viewBox="0 0 6 3" className="h-[3px] w-[6px]" aria-hidden="true">
                <path d="M0 0h6L3 3z" fill="#777" />
              </svg>
            </span>
          </div>
        </Band>
        <Band items="scrDown scrUp pdfDown pdfUp" />
        <Band items="handGrid snapGrid planeA planeB planeC building coords | moveCopy rotate mirror cross info gearPage gears" />
      </div>
      <div className="mb-px flex shrink-0 gap-1 pl-[2px]">
        <Band items="node v member continuous memberSel support setMember | nodeLoad memberLoad imposed imperf | dimension v comment | raster | comboBlue v" />
        <Band items="hand zoomWin zoomOff wireBox boxes | viewX viewY viewZ viewMX v microscope v | cube v" />
        <Band items="frame solid | internal secN secVy secVz secMt secMy secMz secPy secPz | reaction deform multi | report" />
      </div>

      <div className="flex min-h-0 flex-1">
        <aside className="flex w-[285px] shrink-0 flex-col">
          <div className="flex min-h-0 flex-1 flex-col border-r border-b border-[#8d909c] bg-[#e9ecf5]">
            <div className="flex h-[19px] shrink-0 items-center border-b border-[#a9adb9] pr-1 pl-1 text-[#505462]">
              <h2 className="grow">Projekt-Navigator - Daten</h2>
              <button aria-label="Anheften" className="mr-[7px]">
                <Pin size={10} />
              </button>
              <button aria-label="Schließen">
                <X size={11} />
              </button>
            </div>
            <div className="mx-[3px] mt-[3px] mb-[2px] flex min-h-0 flex-1 flex-col border border-t-[#888b95] border-r-white border-b-white border-l-[#888b95] bg-[#fcfbf3]">
              <ul className="min-h-0 flex-1 overflow-hidden">
                <li className="flex h-[18px] items-center gap-[5px] pl-[3px]">
                  <Icon name="logo" />
                  RSTAB
                </li>
                {rows.map((row, i) => (
                  <TreeRow key={i} row={row} index={i} />
                ))}
              </ul>
              <div className="flex h-4 shrink-0 items-center bg-[#f0f0f0] text-[#505050]">
                <button aria-label="Nach links" className="flex w-[17px] justify-center">
                  <svg viewBox="0 0 6 8" className="h-2 w-[6px]" fill="none" stroke="currentColor" strokeWidth="2" aria-hidden="true">
                    <path d="M5 0L1 4l4 4" />
                  </svg>
                </button>
                <div className="h-full flex-1">
                  <div className="h-full w-[71%] bg-[#cdcdcd]" />
                </div>
                <button aria-label="Nach rechts" className="flex w-[17px] justify-center">
                  <svg viewBox="0 0 6 8" className="h-2 w-[6px]" fill="none" stroke="currentColor" strokeWidth="2" aria-hidden="true">
                    <path d="M1 0l4 4-4 4" />
                  </svg>
                </button>
              </div>
            </div>
          </div>
          <div className="flex h-[21px] shrink-0 items-start pl-1 text-[#4c5160]">
            <button className="flex h-5 items-center gap-[2px] rounded-b-[3px] border border-t-0 border-[#bfe0e2] bg-[#f1f4f7] px-[3px] pt-px">
              <Icon name="tabDaten" />
              Daten
            </button>
            <button className="ml-[7px] flex h-5 items-center gap-[2px] pt-px">
              <Icon name="tabZeigen" />
              Zeigen
            </button>
            <button className="ml-[13px] flex h-5 items-center gap-[2px] pt-px">
              <Icon name="tabAnsichten" />
              Ansichten
            </button>
          </div>
        </aside>

        <main className="mr-[2px] ml-[6px] grid min-w-0 flex-1 grid-cols-3 grid-rows-3 border-t border-r-2 border-t-[#5c5f66] border-r-[#e4e6ea] bg-[#b9c0ca]">
          {loads.map((w) => (
            <ModelWindow key={w.title} {...w} active={w.title === "Patch, LF7"} />
          ))}
        </main>
      </div>

      <footer className="flex h-[23px] shrink-0 items-end border-t-2 border-[#eef0f3] bg-[#a0a3ac] pt-px font-['Liberation_Sans',sans-serif] text-[#22252c]">
        <div className="flex h-5 w-full items-stretch justify-end gap-[2px] bg-linear-to-b from-[#e6e8ee] via-[#abb0ba] via-50% to-[#bcc0c6] pt-px">
          {fields.map(([label, on, width]) => (
            <span
              key={label}
              className={`${width} flex items-center justify-center border-t border-r border-l ${on ? "border-t-black border-r-white border-l-black" : "border-t-white border-r-[#999] border-l-white pb-[2px]"}`}
            >
              {label}
            </span>
          ))}
          <span className="w-[188px] border-r border-l border-[#9a9ea6]" />
          <span className="w-[86px] border-r border-[#9a9ea6]" />
          <span className="w-[72px] border-r border-[#9a9ea6]" />
          <span className="w-[72px] border-r border-[#9a9ea6]" />
          <span className="w-[70px]" />
        </div>
      </footer>
    </div>
  );
}
